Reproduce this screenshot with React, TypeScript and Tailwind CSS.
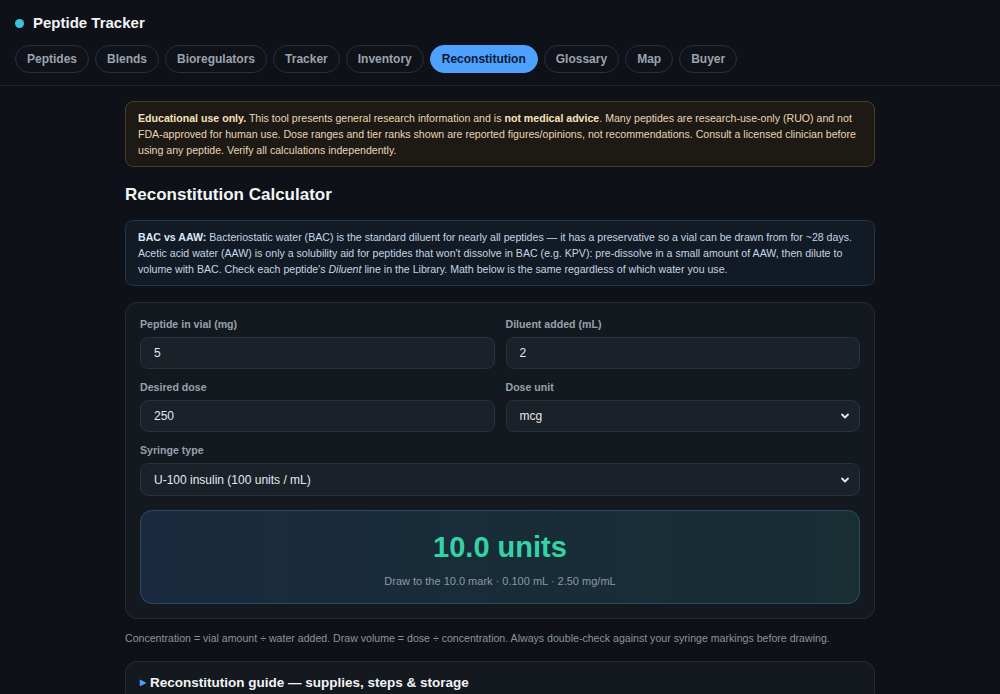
import React from 'react';

const tabs = ['Peptides', 'Blends', 'Bioregulators', 'Tracker', 'Inventory', 'Reconstitution', 'Glossary', 'Map', 'Buyer'];

function Chevron() {
  return (
    <svg width="12" height="12" viewBox="0 0 12 12" className="pointer-events-none absolute right-[9px] top-1/2 -translate-y-1/2">
      <path d="M3 4.5 L6 7.5 L9 4.5" fill="none" stroke="#e5e7eb" strokeWidth="1.8" strokeLinecap="round" strokeLinejoin="round" />
    </svg>
  );
}

function Field({ label, children }: { label: string; children: React.ReactNode }) {
  return (
    <div className="flex flex-col gap-[6px]">
      <label className="text-[10.6px] leading-[14px] font-bold text-[#98a1ac]">{label}</label>
      {children}
    </div>
  );
}

const inputCls =
  'h-[32px] w-full rounded-[8px] border border-[#29303a] bg-[#1b2129] px-[13px] text-[12px] text-[#e6e9ee] outline-none';

export default function App() {
  const [vial, setVial] = React.useState('5');
  const [water, setWater] = React.useState('2');
  const [dose, setDose] = React.useState('250');
  const [unit, setUnit] = React.useState('mcg');
  const [syringe, setSyringe] = React.useState('100');

  const conc = parseFloat(vial) / parseFloat(water);
  const doseMg = unit === 'mcg' ? parseFloat(dose) / 1000 : parseFloat(dose);
  const ml = doseMg / conc;
  const units = ml * parseFloat(syringe);

  return (
    <div className="min-h-screen bg-[#0e1117] font-['Liberation_Sans',Arial,sans-serif]">
      <header className="border-b border-[#1e232c] px-[15px] pt-[12px] pb-[12px]">
        <div className="mb-[11px] flex h-[22px] items-center gap-[9px]">
          <span className="h-[9px] w-[9px] rounded-full bg-[#3dc3d9]" />
          <h1 className="text-[15px] font-bold text-[#f3f4f6]">Peptide Tracker</h1>
        </div>
        <nav className="flex gap-[6px]">
          {tabs.map((t) =>
            t === 'Reconstitution' ? (
              <button key={t} className="h-[28px] rounded-full border border-[#4ea1ff] bg-[#4ea1ff] px-[11px] text-[12px] font-bold text-[#0b1a33]">
                {t}
              </button>
            ) : (
              <button key={t} className="h-[28px] rounded-full border border-[#2a2f38] bg-[#0f1218] px-[11px] text-[12px] font-bold text-[#9ba3ae]">
                {t}
              </button>
            )
          )}
        </nav>
      </header>

      <main className="mx-auto w-[750px] pt-[15px] pb-8">
        <div className="rounded-[8px] border border-[#4a3a29] bg-[#1d1a16] px-[12px] py-[8px] text-[10.6px] leading-[16px] text-[#e9d6b2]">
          <b className="text-[#f6e2bd]">Educational use only.</b> This tool presents general research information and is{' '}
          <b className="text-[#f6e2bd]">not medical advice</b>. Many peptides are research-use-only (RUO) and not FDA-approved for human use. Dose
          ranges and tier ranks shown are reported figures/opinions, not recommendations. Consult a licensed clinician before using any peptide.
          Verify all calculations independently.
        </div>

        <h2 className="mt-[16px] text-[17px] leading-[24px] font-bold text-[#f3f4f6]">Reconstitution Calculator</h2>

        <div className="mt-[13px] rounded-[8px] border border-[#233548] bg-[#111a25] px-[12px] py-[8px] text-[10.6px] leading-[16px] text-[#c7d4e3]">
          <b className="text-[#dde8f5]">BAC vs AAW:</b> Bacteriostatic water (BAC) is the standard diluent for nearly all peptides — it has a
          preservative so a vial can be drawn from for ~28 days. Acetic acid water (AAW) is only a solubility aid for peptides that won't dissolve in
          BAC (e.g. KPV): pre-dissolve in a small amount of AAW, then dilute to volume with BAC. Check each peptide's <i>Diluent</i> line in the
          Library. Math below is the same regardless of which water you use.
        </div>

        <section className="mt-[16px] flex flex-col gap-[11px] rounded-[12px] border border-[#262c36] bg-[#141920] p-[14px]">
          <div className="grid grid-cols-2 gap-[11px]">
            <Field label="Peptide in vial (mg)">
              <input className={inputCls} value={vial} onChange={(e) => setVial(e.target.value)} />
            </Field>
            <Field label="Diluent added (mL)">
              <input className={inputCls} value={water} onChange={(e) => setWater(e.target.value)} />
            </Field>
          </div>
          <div className="grid grid-cols-2 gap-[11px]">
            <Field label="Desired dose">
              <input className={inputCls} value={dose} onChange={(e) => setDose(e.target.value)} />
            </Field>
            <Field label="Dose unit">
              <div className="relative">
                <select className={inputCls + ' appearance-none'} value={unit} onChange={(e) => setUnit(e.target.value)}>
                  <option value="mcg">mcg</option>
                  <option value="mg">mg</option>
                </select>
                <Chevron />
              </div>
            </Field>
          </div>
          <Field label="Syringe type">
            <div className="relative">
              <select className={inputCls + ' h-[33px] appearance-none'} value={syringe} onChange={(e) => setSyringe(e.target.value)}>
                <option value="100">U-100 insulin (100 units / mL)</option>
                <option value="50">U-50 insulin (50 units / mL)</option>
                <option value="40">U-40 insulin (40 units / mL)</option>
              </select>
              <Chevron />
            </div>
          </Field>

          <div className="mt-[3px] flex flex-col items-center rounded-[12px] border border-[#2e4961] bg-gradient-to-r from-[#1a2a3e] to-[#172e33] pt-[18px] pb-[15px]">
            <div className="text-[29px] leading-[36px] font-bold text-[#34d3a6]">{units.toFixed(1)} units</div>
            <div className="mt-[9px] text-[11px] leading-[14px] text-[#8e98a4]">
              Draw to the {units.toFixed(1)} mark · {ml.toFixed(3)} mL · {conc.toFixed(2)} mg/mL
            </div>
          </div>
        </section>

        <p className="mt-[12px] text-[10.6px] leading-[14px] text-[#8b949f]">
          Concentration = vial amount ÷ water added. Draw volume = dose ÷ concentration. Always double-check against your syringe markings before
          drawing.
        </p>

        <details className="mt-[16px] rounded-[12px] border border-[#262c36] bg-[#141920] px-[14px] py-[13px]">
          <summary className="flex list-none items-center gap-[4px] text-[13.5px] leading-[16px] font-bold text-[#f3f4f6]">
            <span className="text-[8px] text-[#4ea1ff]">▶</span>
            Reconstitution guide — supplies, steps &amp; storage
          </summary>
          <div className="mt-3 text-[12px] text-[#c7d4e3]">Supplies, steps and storage notes.</div>
        </details>
      </main>
    </div>
  );
}
